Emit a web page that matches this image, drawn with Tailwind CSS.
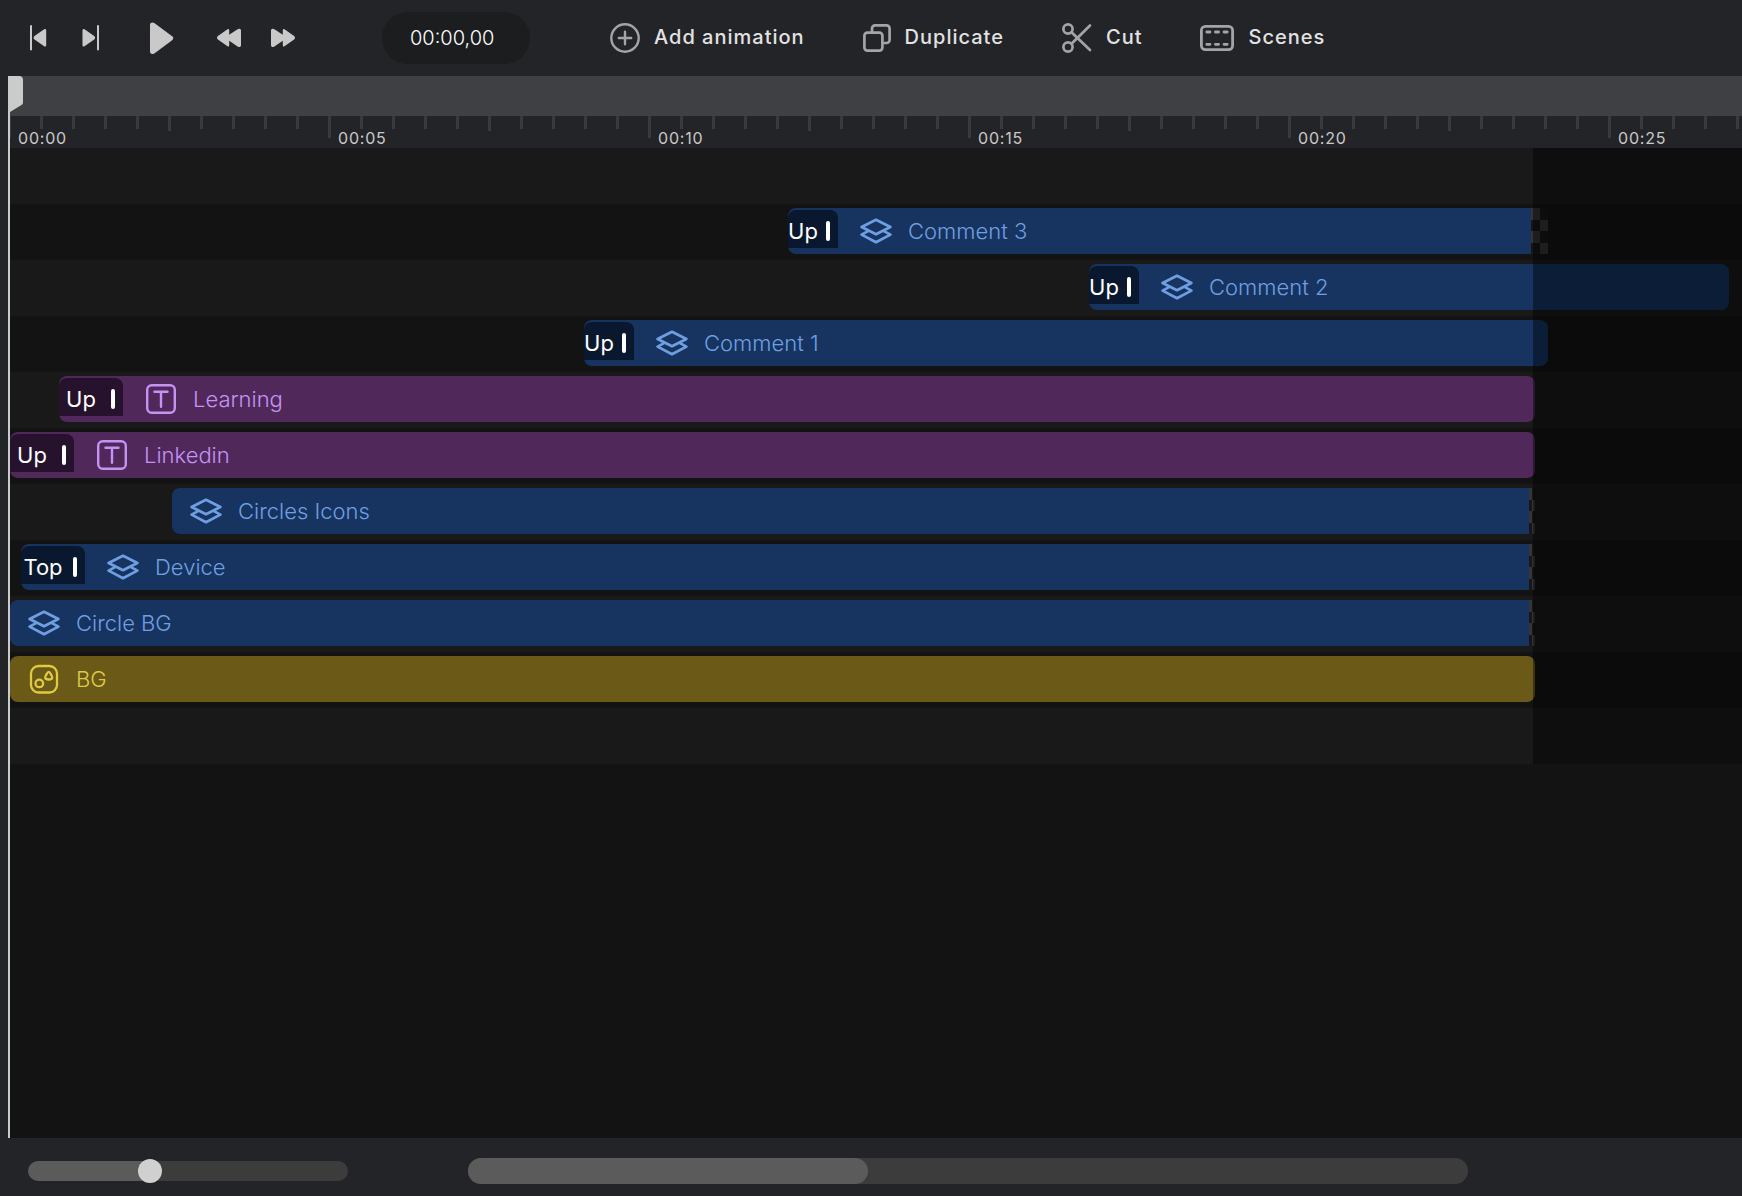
<!DOCTYPE html>
<html lang="en">
<head>
  <meta charset="UTF-8">
  <meta name="viewport" content="width=device-width, initial-scale=1.0">

  <title>Timeline</title>

  <script src="https://cdn.jsdelivr.net/npm/@tailwindcss/browser@4"></script>
</head>
<body class="flex min-h-screen flex-col overflow-x-hidden bg-[#232427] font-[Inter,sans-serif] text-white">

  <!-- icon sprite -->
  <svg class="hidden">
    <symbol id="icon-layers" viewBox="0 0 32 26" fill="none" stroke="currentColor" stroke-width="2.7" stroke-linejoin="round" stroke-linecap="round">
      <path d="M16 1.8 30.4 9 16 16.2 1.6 9Z"/>
      <path d="M7.600 13.400 1.600 16.600 16 24.200 30.400 16.600 24.400 13.400"/>
    </symbol>
    <symbol id="icon-text" viewBox="0 0 32 32" fill="none" stroke="currentColor" stroke-width="2.4" stroke-linecap="round">
      <rect x="2.200" y="2.200" width="27.600" height="27.600" rx="4.500"/>
      <path d="M9.500 8.700h13M16 8.700v15"/>
    </symbol>
    <symbol id="icon-shapes" viewBox="0 0 32 32" fill="none" stroke="currentColor" stroke-width="2.3" stroke-linejoin="round">
      <rect x="3" y="3" width="26" height="26.500" rx="7.500"/>
      <circle cx="11.300" cy="20.400" r="3.800"/>
      <path d="M20.7 8.9c-.9 0-1.4.8-2 2-.8 1.5-1.7 2.7-1.5 3.900.2 1.300 1.600 1.700 3.500 1.700s3.300-.4 3.500-1.700c.2-1.200-.7-2.400-1.500-3.900-.6-1.200-1.100-2-2-2Z"/>
    </symbol>
    <symbol id="checker" viewBox="0 0 2 4" preserveAspectRatio="none" shape-rendering="crispEdges">
      <path fill="#171717" d="M0 0h2v4H0z"/>
      <path fill="#353535" d="M0 0h1v1H0zM1 1h1v1H1zM0 2h1v1H0zM1 3h1v1H1z"/>
    </symbol>
  </svg>

  <header class="flex h-[76px] shrink-0 items-center pl-[26px] text-[#c9c9ca]">
    <button aria-label="Previous frame" class="mr-[29px]">
      <svg class="h-8 w-6" viewBox="0 0 24 32" fill="currentColor">
        <rect x="4" y="3" width="2" height="25.500" rx="1"/>
        <path d="M18.200 7.200c1-.6 2 0 2 1.200v14.800c0 1.200-1 1.700-2 1l-9.700-6.600c-1.200-.8-1.200-2.800 0-3.600Z"/>
      </svg>
    </button>
    <button aria-label="Next frame" class="mr-[47px]">
      <svg class="h-8 w-6" viewBox="0 0 24 32" fill="currentColor">
        <path d="M5.500 7.200c-1-.6-2 0-2 1.200v14.800c0 1.200 1 1.700 2 1l9.700-6.600c1.200-.8 1.200-2.800 0-3.600Z"/>
        <rect x="18" y="3" width="2" height="25.500" rx="1"/>
      </svg>
    </button>
    <button aria-label="Play" class="mr-[43px]">
      <svg class="h-8 w-6" viewBox="0 0 24 32" fill="currentColor">
        <path d="M5 1.600C3 -.2 0 .2 0 3v26.500c0 2.800 3 3.200 5 1.500L21.800 18.400c2-1.600 2-2.700 0-4.300Z"/>
      </svg>
    </button>
    <button aria-label="Rewind" class="mr-[30px]">
      <svg class="h-8 w-6" viewBox="0 0 24 32" fill="currentColor">
        <path d="M10.500 7.200c1-.6 1.700 0 1.700 1.200v4.400l8.400-5.600c1.500-1 3.400-.6 3.400 1.200v14.800c0 1.800-1.900 2.200-3.400 1.200l-8.400-5.600v4.400c0 1.200-.7 1.800-1.700 1L.9 17.600c-1.200-.8-1.200-2.800 0-3.600Z"/>
      </svg>
    </button>
    <button aria-label="Fast forward" class="mr-[87px]">
      <svg class="h-8 w-6" viewBox="0 0 24 32" fill="currentColor">
        <path d="M13.500 7.200c-1-.6-1.700 0-1.700 1.200v4.400L3.400 7.200C1.900 6.200 0 6.600 0 8.400v14.800c0 1.800 1.900 2.200 3.400 1.200l8.400-5.600v4.400c0 1.200.7 1.800 1.700 1l9.600-6.600c1.200-.8 1.200-2.800 0-3.600Z"/>
      </svg>
    </button>

    <input type="text" value="00:00,00" aria-label="Current time" class="mr-20 h-[52px] w-[148px] rounded-full bg-[#1c1d1f] px-7 text-xl font-light text-white outline-none">

    <nav class="flex gap-[58px] text-xl font-medium tracking-wider whitespace-nowrap text-[#e2e2e3]">
      <button class="flex items-center gap-3.5">
        <svg class="size-[30px] text-[#a3a4a5]" viewBox="0 0 30 30" fill="none" stroke="currentColor" stroke-width="2.400" stroke-linecap="round">
          <circle cx="15" cy="15" r="13.700"/>
          <path d="M15 8.800v12.400M8.800 15h12.400"/>
        </svg>
        <span class="pb-0.5">Add animation</span>
      </button>
      <button class="flex items-center gap-3.5">
        <svg class="size-7 text-[#a3a4a5]" viewBox="0 0 28 28" fill="none" stroke="currentColor" stroke-width="2.700">
          <rect x="1.400" y="8.600" width="18" height="18" rx="3"/>
          <path d="M9 8.500V4.400a3 3 0 0 1 3-3h11.600a3 3 0 0 1 3 3V16a3 3 0 0 1-3 3h-4"/>
        </svg>
        <span class="pb-0.5">Duplicate</span>
      </button>
      <button class="flex items-center gap-3.5">
        <svg class="size-[30px] text-[#a3a4a5]" viewBox="0 0 30 30" fill="none" stroke="currentColor" stroke-width="2.700" stroke-linecap="round">
          <circle cx="6" cy="6" r="4.600"/>
          <circle cx="6" cy="24" r="4.600"/>
          <path d="M9.500 9.300 28 27M9.500 20.700 28 2.500"/>
        </svg>
        <span class="pb-0.5">Cut</span>
      </button>
      <button class="flex items-center gap-3.5">
        <svg class="h-[26px] w-[34px] text-[#a3a4a5]" viewBox="0 0 34 26" fill="none" stroke="currentColor" stroke-width="2.800">
          <rect x="1.400" y="1.400" width="31.200" height="23.200" rx="4"/>
          <path stroke-linecap="round" d="M6.800 7h3.200M15.400 7h3.200M24 7h3.200M6.800 19.300h3.200M15.400 19.300h3.200M24 19.300h3.200"/>
        </svg>
        <span class="pb-0.5">Scenes</span>
      </button>
    </nav>
  </header>

  <main class="relative ml-2 flex-1 bg-[#131313]">
    <div class="h-10 bg-[#3f4044]"></div>

    <div id="ruler" class="flex h-8 overflow-hidden bg-[#232427]"></div>

    <div class="relative overflow-hidden text-[22px] leading-[30px] font-light whitespace-nowrap">
      <div class="h-14 bg-[#191919]"></div>

      <div class="flex h-14 bg-[#131313] pt-1">
        <div class="flex h-[46px] shrink-0 items-center overflow-hidden rounded-l-lg bg-[#16345f] text-[#6f9fe2]" style="margin-left: 780px; width: 743px">
          <div class="mr-[22px] mb-1 flex h-[38px] w-[50px] items-center rounded-t-lg bg-[#0a182f] pt-1 font-normal text-white">
            <span class="min-w-0 flex-1 text-center">Up</span><i class="mx-2 h-5 w-1 rounded-xs bg-white"></i>
          </div>
          <svg class="mr-4 h-[26px] w-8"><use href="#icon-layers"/></svg>
          Comment 3
        </div>
        <svg class="h-[46px] shrink-0" style="width: 17px"><use href="#checker"/></svg>
      </div>

      <div class="flex h-14 bg-[#191919] pt-1">
        <div class="flex h-[46px] shrink-0 items-center overflow-hidden rounded-lg bg-[#16345f] text-[#6f9fe2]" style="margin-left: 1081px; width: 640px">
          <div class="mr-[22px] mb-1 flex h-[38px] w-[50px] items-center rounded-t-lg bg-[#0a182f] pt-1 font-normal text-white">
            <span class="min-w-0 flex-1 text-center">Up</span><i class="mx-2 h-5 w-1 rounded-xs bg-white"></i>
          </div>
          <svg class="mr-4 h-[26px] w-8"><use href="#icon-layers"/></svg>
          Comment 2
        </div>
      </div>

      <div class="flex h-14 bg-[#131313] pt-1">
        <div class="flex h-[46px] shrink-0 items-center overflow-hidden rounded-lg bg-[#16345f] text-[#6f9fe2]" style="margin-left: 576px; width: 964px">
          <div class="mr-[22px] mb-1 flex h-[38px] w-[50px] items-center rounded-t-lg bg-[#0a182f] pt-1 font-normal text-white">
            <span class="min-w-0 flex-1 text-center">Up</span><i class="mx-2 h-5 w-1 rounded-xs bg-white"></i>
          </div>
          <svg class="mr-4 h-[26px] w-8"><use href="#icon-layers"/></svg>
          Comment 1
        </div>
      </div>

      <div class="flex h-14 bg-[#191919] pt-1">
        <div class="flex h-[46px] shrink-0 items-center overflow-hidden rounded-lg bg-[#50285a] text-[#c693f5]" style="margin-left: 51px; width: 1476px">
          <div class="mr-[22px] mb-1 flex h-[38px] w-16 items-center rounded-t-lg bg-[#27122d] pt-1 font-normal text-white">
            <span class="min-w-0 flex-1 text-center">Up</span><i class="mx-2 h-5 w-1 rounded-xs bg-white"></i>
          </div>
          <svg class="mr-4 size-8"><use href="#icon-text"/></svg>
          Learning
        </div>
      </div>

      <div class="flex h-14 bg-[#131313] pt-1">
        <div class="flex h-[46px] shrink-0 items-center overflow-hidden rounded-lg bg-[#50285a] text-[#c693f5]" style="margin-left: 2px; width: 1525px">
          <div class="mr-[22px] mb-1 flex h-[38px] w-16 items-center rounded-t-lg bg-[#27122d] pt-1 font-normal text-white">
            <span class="min-w-0 flex-1 text-center">Up</span><i class="mx-2 h-5 w-1 rounded-xs bg-white"></i>
          </div>
          <svg class="mr-4 size-8"><use href="#icon-text"/></svg>
          Linkedin
        </div>
      </div>

      <div class="flex h-14 bg-[#191919] pt-1">
        <div class="flex h-[46px] shrink-0 items-center overflow-hidden rounded-l-lg bg-[#16345f] pl-[18px] text-[#6f9fe2]" style="margin-left: 164px; width: 1357px">
          <svg class="mr-4 h-[26px] w-8"><use href="#icon-layers"/></svg>
          Circles Icons
        </div>
        <svg class="h-[46px] shrink-0" style="width: 6px"><use href="#checker"/></svg>
      </div>

      <div class="flex h-14 bg-[#131313] pt-1">
        <div class="flex h-[46px] shrink-0 items-center overflow-hidden rounded-l-lg bg-[#16345f] text-[#6f9fe2]" style="margin-left: 13px; width: 1508px">
          <div class="mr-[22px] mb-1 flex h-[38px] w-16 items-center rounded-t-lg bg-[#0a182f] pt-1 font-normal text-white">
            <span class="min-w-0 flex-1 text-center">Top</span><i class="mx-2 h-5 w-1 rounded-xs bg-white"></i>
          </div>
          <svg class="mr-4 h-[26px] w-8"><use href="#icon-layers"/></svg>
          Device
        </div>
        <svg class="h-[46px] shrink-0" style="width: 6px"><use href="#checker"/></svg>
      </div>

      <div class="flex h-14 bg-[#191919] pt-1">
        <div class="flex h-[46px] shrink-0 items-center overflow-hidden rounded-l-lg bg-[#16345f] pl-[18px] text-[#6f9fe2]" style="margin-left: 2px; width: 1519px">
          <svg class="mr-4 h-[26px] w-8"><use href="#icon-layers"/></svg>
          Circle BG
        </div>
        <svg class="h-[46px] shrink-0" style="width: 6px"><use href="#checker"/></svg>
      </div>

      <div class="flex h-14 bg-[#131313] pt-1">
        <div class="flex h-[46px] shrink-0 items-center overflow-hidden rounded-lg bg-[#6a5917] pl-[18px] text-[#dfcb42]" style="margin-left: 2px; width: 1525px">
          <svg class="mr-4 size-8"><use href="#icon-shapes"/></svg>
          BG
        </div>
      </div>

      <div class="h-14 bg-[#191919]"></div>

      <!-- everything after the end of the video is dimmed -->
      <div class="pointer-events-none absolute inset-y-0 right-0 bg-black/42" style="left: 1525px"></div>
    </div>

    <!-- playhead -->
    <div class="absolute inset-y-0 left-0 w-0.5 bg-[#cbcbcb]">
      <svg class="h-9 w-[15px] max-w-none text-[#cbcbcb]" viewBox="0 0 15 36" fill="currentColor">
        <path d="M0 0h11a4 4 0 0 1 4 4v22.500a3 3 0 0 1-1.500 2.600L2 36H0Z"/>
      </svg>
    </div>
  </main>

  <footer class="flex h-[58px] shrink-0 items-center px-7 pt-2">
    <input type="range" min="0" max="1000" value="372" aria-label="Zoom" class="mr-30 h-5 w-80 appearance-none rounded-full bg-linear-to-r from-[#5b5b5b] from-38% to-[#3c3c3c] to-38% outline-none
      [&::-webkit-slider-thumb]:size-6 [&::-webkit-slider-thumb]:appearance-none [&::-webkit-slider-thumb]:rounded-full [&::-webkit-slider-thumb]:bg-[#d0d0d0]">

    <div class="h-[26px] max-w-[1000px] flex-1 rounded-full bg-[#3c3c3c]">
      <div class="h-full rounded-full bg-[#5b5b5b]" style="width: 40%"></div>
    </div>
  </footer>

  <script>
    const ruler = document.getElementById('ruler');

    // one block per five seconds, ten ticks in each
    for (let sec = 0; sec <= 25; sec += 5) {
      let ticks = '';
      for (let i = 0; i < 10; i++) {
        const height = i === 0 ? 'h-[22px]' : i === 5 ? 'h-[15px]' : 'h-[13px]';
        ticks += `<i class="w-8 border-l-3 border-[#393a3d] ${height}"></i>`;
      }

      ruler.innerHTML += `
        <div class="grid w-80 shrink-0">
          <div class="col-start-1 row-start-1 flex items-start">${ticks}</div>
          <span class="col-start-1 row-start-1 self-end pl-2.5 text-base leading-5 tracking-wider text-[#c9c9ca]">00:${String(sec).padStart(2, '0')}</span>
        </div>`;
    }
  </script>
</body>
</html>
